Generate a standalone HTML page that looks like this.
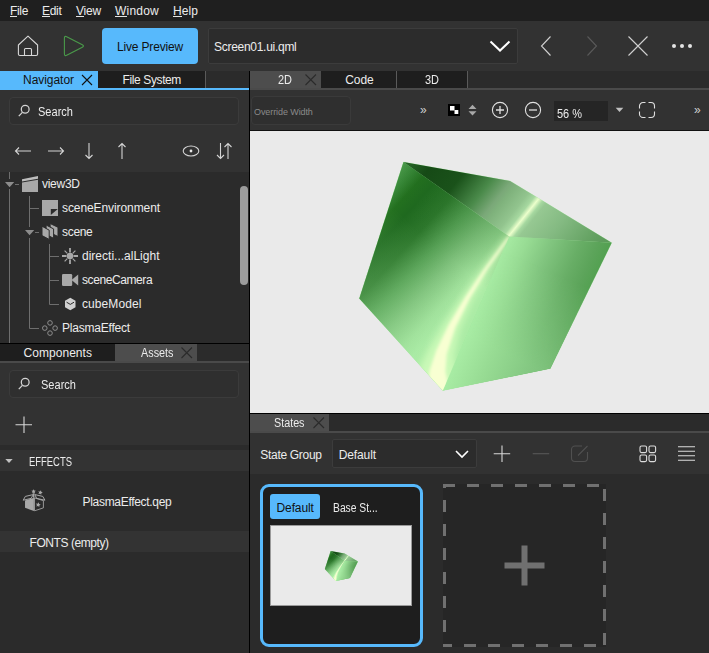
<!DOCTYPE html>
<html><head><meta charset="utf-8"><title>Qt Design Studio</title>
<style>
html,body{margin:0;padding:0;background:#2b2b2b;}
body{width:709px;height:653px;position:relative;overflow:hidden;font-family:"Liberation Sans",sans-serif;color:#ececec;}
body>div,body>svg,body>span{position:absolute;display:block;}
.t{white-space:nowrap;}
u{text-decoration:underline;text-underline-offset:1px;}
</style></head><body>
<div style="left:0px;top:0px;width:709px;height:21px;background:#1f1f1f;"></div>
<div style="left:0px;top:21px;width:709px;height:50px;background:#323232;"></div>
<div style="left:0px;top:71px;width:249px;height:19px;background:#2b2b2b;"></div>
<div style="left:0px;top:71px;width:205px;height:17px;background:#1e1e1e;"></div>
<div style="left:0px;top:71px;width:98px;height:17px;background:#57b9fc;"></div>
<div style="left:205px;top:71px;width:1px;height:17px;background:#5a5a5a;"></div>
<div style="left:0px;top:88px;width:249px;height:2px;background:#57b9fc;"></div>
<div style="left:0px;top:90px;width:249px;height:82px;background:#323232;"></div>
<div style="left:0px;top:172px;width:249px;height:171px;background:#2b2b2b;"></div>
<div style="left:0px;top:343px;width:249px;height:1px;background:#000;"></div>
<div style="left:0px;top:344px;width:249px;height:17px;background:#2b2b2b;"></div>
<div style="left:0px;top:344px;width:115px;height:17px;background:#1e1e1e;"></div>
<div style="left:115px;top:344px;width:82px;height:17px;background:#4d4d4d;"></div>
<div style="left:0px;top:361px;width:249px;height:2px;background:#4a4a4a;"></div>
<div style="left:0px;top:363px;width:249px;height:82px;background:#323232;"></div>
<div style="left:0px;top:445px;width:249px;height:208px;background:#2b2b2b;"></div>
<div style="left:0px;top:450px;width:249px;height:21px;background:#333333;"></div>
<div style="left:0px;top:531px;width:249px;height:21px;background:#333333;"></div>
<div style="left:249px;top:71px;width:1px;height:582px;background:#000;"></div>
<div style="left:250px;top:71px;width:459px;height:19px;background:#2b2b2b;"></div>
<div style="left:250px;top:71px;width:71px;height:17px;background:#4d4d4d;"></div>
<div style="left:321px;top:71px;width:146px;height:17px;background:#1e1e1e;"></div>
<div style="left:396px;top:71px;width:1px;height:17px;background:#5a5a5a;"></div>
<div style="left:467px;top:71px;width:1px;height:17px;background:#5a5a5a;"></div>
<div style="left:250px;top:88px;width:459px;height:2px;background:#4a4a4a;"></div>
<div style="left:250px;top:90px;width:459px;height:41px;background:#323232;"></div>
<div style="left:250px;top:130px;width:459px;height:1px;background:#111;"></div>
<div style="left:250px;top:131px;width:459px;height:282px;background:#eaeaea;"></div>
<div style="left:250px;top:413px;width:459px;height:1px;background:#000;"></div>
<div style="left:250px;top:414px;width:459px;height:17px;background:#2b2b2b;"></div>
<div style="left:250px;top:414px;width:79px;height:17px;background:#4d4d4d;"></div>
<div style="left:250px;top:431px;width:459px;height:2px;background:#4a4a4a;"></div>
<div style="left:250px;top:433px;width:459px;height:41px;background:#323232;"></div>
<div style="left:250px;top:474px;width:459px;height:179px;background:#2b2b2b;"></div>
<span class="t" style="left:10px;top:3px;font-size:12px;line-height:16px;height:16px;letter-spacing:-0.336px;">File</span>
<div style="left:10px;top:16px;width:7px;height:1px;background:#e4e4e4;"></div>
<span class="t" style="left:42px;top:3px;font-size:12px;line-height:16px;height:16px;letter-spacing:-0.297px;">Edit</span>
<div style="left:42px;top:16px;width:8px;height:1px;background:#e4e4e4;"></div>
<span class="t" style="left:76px;top:3px;font-size:12px;line-height:16px;height:16px;letter-spacing:-0.199px;">View</span>
<div style="left:76px;top:16px;width:8px;height:1px;background:#e4e4e4;"></div>
<span class="t" style="left:115px;top:3px;font-size:12px;line-height:16px;height:16px;letter-spacing:0.219px;">Window</span>
<div style="left:115px;top:16px;width:12px;height:1px;background:#e4e4e4;"></div>
<span class="t" style="left:173px;top:3px;font-size:12px;line-height:16px;height:16px;letter-spacing:0.078px;">Help</span>
<div style="left:173px;top:16px;width:9px;height:1px;background:#e4e4e4;"></div>
<svg style="left:14px;top:32px;" width="28" height="28" viewBox="0 0 28 28"><path d="M4.4 22 V13 L14 4.200 L23.600 13 V22 A1.500 1.500 0 0 1 22.100 23.500 H5.900 A1.500 1.500 0 0 1 4.400 22 Z M10.500 23.500 V17.500 A1 1 0 0 1 11.500 16.500 H16.500 A1 1 0 0 1 17.500 17.500 V23.500" fill="none" stroke="#d8d8d8" stroke-width="1.1" stroke-linejoin="round"/></svg>
<svg style="left:60px;top:32px;" width="28" height="28" viewBox="0 0 28 28"><path d="M4.40 6.20 Q4.40 3.60 6.71 4.79 L22.29 12.81 Q24.60 14.00 22.29 15.19 L6.71 23.21 Q4.40 24.40 4.40 21.80 Z" fill="none" stroke="#4a9a4a" stroke-width="1.1" stroke-linejoin="round"/></svg>
<div style="left:102px;top:28px;width:96px;height:36px;background:#57b9fc;border-radius:4px;"></div>
<span class="t" style="left:117px;top:39px;font-size:12px;line-height:16px;height:16px;color:#111;letter-spacing:-0.169px;">Live Preview</span>
<div style="left:208px;top:28px;width:310px;height:36px;background:#2c2c2c;border:1px solid #3c3c3c;box-sizing:border-box;border-radius:2px;"></div>
<span class="t" style="left:214px;top:39px;font-size:12px;line-height:16px;height:16px;letter-spacing:-0.281px;">Screen01.ui.qml</span>
<svg style="left:486px;top:36px;" width="28" height="20" viewBox="0 0 28 20"><path d="M4.5 5.5 L14 14.5 L23.5 5.5" fill="none" stroke="#fff" stroke-width="2" /></svg>
<svg style="left:536px;top:32px;" width="20" height="28" viewBox="0 0 20 28"><path d="M14.5 4.5 L5.5 14 L14.5 23.5" fill="none" stroke="#d0d0d0" stroke-width="1.1"/></svg>
<svg style="left:582px;top:32px;" width="20" height="28" viewBox="0 0 20 28"><path d="M5.5 4.5 L14.5 14 L5.5 23.5" fill="none" stroke="#5a5a5a" stroke-width="1.1"/></svg>
<svg style="left:624px;top:32px;" width="28" height="28" viewBox="0 0 28 28"><path d="M4.5 4.5 L23.5 23.5 M23.5 4.5 L4.5 23.5" fill="none" stroke="#d0d0d0" stroke-width="1.1"/></svg>
<svg style="left:668px;top:40px;" width="28" height="12" viewBox="0 0 28 12"><circle cx="6" cy="6" r="2" fill="#e4e4e4"/><circle cx="14" cy="6" r="2" fill="#e4e4e4"/><circle cx="22" cy="6" r="2" fill="#e4e4e4"/></svg>
<span class="t" style="left:23px;top:72px;font-size:12px;line-height:16px;height:16px;color:#111;letter-spacing:-0.040px;">Navigator</span>
<svg style="left:80px;top:73px;" width="14" height="14" viewBox="0 0 14 14"><path d="M2 2 L12 12 M12 2 L2 12" stroke="#111" stroke-width="1.1"/></svg>
<span class="t" style="left:122.5px;top:72px;font-size:12px;line-height:16px;height:16px;letter-spacing:-0.381px;">File System</span>
<div style="left:9px;top:97px;width:230px;height:28px;background:#2f2f2f;border:1px solid #3b3b3b;box-sizing:border-box;border-radius:4px;"></div>
<svg style="left:17px;top:104px;" width="14" height="14" viewBox="0 0 14 14"><circle cx="8.200" cy="5.300" r="3.900" fill="none" stroke="#d4d4d4" stroke-width="1.25"/><path d="M5.400 8.300 L1.800 12.200" stroke="#d4d4d4" stroke-width="1.25"/></svg>
<span class="t" style="left:38px;top:104px;font-size:12px;line-height:16px;height:16px;transform:scaleX(0.9203);transform-origin:0 0;">Search</span>
<svg style="left:13px;top:141px;" width="20" height="20" viewBox="0 0 20 20"><path d="M18 10 H2.5 M6 6.5 L2.5 10 L6 13.5" stroke="#d4d4d4" stroke-width="1.1" fill="none"/></svg>
<svg style="left:46px;top:141px;" width="20" height="20" viewBox="0 0 20 20"><path d="M2 10 H17.5 M14 6.5 L17.5 10 L14 13.5" stroke="#d4d4d4" stroke-width="1.1" fill="none"/></svg>
<svg style="left:79px;top:141px;" width="20" height="20" viewBox="0 0 20 20"><path d="M10 2 V17.5 M6.5 14 L10 17.5 L13.5 14" stroke="#d4d4d4" stroke-width="1.1" fill="none"/></svg>
<svg style="left:112px;top:141px;" width="20" height="20" viewBox="0 0 20 20"><path d="M10 18 V2.5 M6.5 6 L10 2.5 L13.5 6" stroke="#d4d4d4" stroke-width="1.1" fill="none"/></svg>
<svg style="left:181px;top:141px;" width="20" height="20" viewBox="0 0 20 20"><ellipse cx="10" cy="10" rx="7.8" ry="5" stroke="#d4d4d4" stroke-width="1.1" fill="none"/><circle cx="10" cy="10" r="1.4" fill="#e8e8e8"/></svg>
<svg style="left:214px;top:141px;" width="20" height="20" viewBox="0 0 20 20"><path d="M6.5 2 V17.5 M3 14 L6.5 17.5 L10 14 M14 18 V2.5 M10.5 6 L14 2.5 L17.5 6" stroke="#d4d4d4" stroke-width="1.1" fill="none"/></svg>
<svg style="left:0px;top:172px;" width="249" height="171" viewBox="0 0 249 171">
<path d="M9.5 0 V7 M9.500 17 V171 M29.5 24 V55 M29.500 66 V156.5 H39 M29.5 36.5 H39 M49.5 72 V132.5 H59 M49.5 84.5 H59 M49.5 108.5 H59 M15 12.5 H19 M35 60.5 H39" stroke="#6e6e6e" stroke-width="1" fill="none"/>
<path d="M5 10 H14.2 L9.6 15.3 Z M25 58 H34.2 L29.6 63.300 Z" fill="#8c8c8c"/>
</svg>
<svg style="left:22px;top:175px;" width="17" height="18" viewBox="0 0 17 18"><path d="M0 4.300 L16 1 V3.800 L0 6.400 Z" fill="#bcbcbc"/><path d="M0 7.400 L16 4.800 V17 H0 Z" fill="#a8a8a8"/></svg>
<svg style="left:42px;top:200px;" width="16" height="16" viewBox="0 0 16 16"><path d="M0 0 H16 V16 H0 Z" fill="#a8a8a8"/><path d="M8.800 9 H15.800 L8.800 15 Z" fill="#2b2b2b"/></svg>
<svg style="left:42px;top:223px;" width="17" height="18" viewBox="0 0 17 18"><g stroke="#2b2b2b" stroke-width="1" fill="#a8a8a8"><path d="M8.100 0.500 L16 4.300 V13.500 L8.100 9.800 Z"/><path d="M4.100 2 L11.600 5.900 V15.300 L4.100 11.500 Z"/><path d="M0 3.200 L7.200 7.200 V16.400 L0 12.600 Z"/></g></svg>
<svg style="left:61px;top:247px;" width="18" height="18" viewBox="0 0 18 18"><path d="M9 1 V5.500 M9 12.500 V17 M1 9 H5.500 M12.500 9 H17" stroke="#a8a8a8" stroke-width="1.8"/><path d="M3.600 3.600 L6.300 6.300 M11.700 11.700 L14.400 14.400 M14.400 3.600 L11.700 6.300 M6.300 11.700 L3.600 14.400" stroke="#a8a8a8" stroke-width="1.2"/><circle cx="9" cy="9" r="3.300" fill="#a8a8a8"/></svg>
<svg style="left:62px;top:274px;" width="17" height="12" viewBox="0 0 17 12"><rect x="0" y="0" width="10.200" height="12" rx="1.300" fill="#a8a8a8"/><path d="M9.500 6 L16.200 0.600 V11.600 Z" fill="#a8a8a8"/></svg>
<svg style="left:64px;top:297px;" width="13" height="14" viewBox="0 0 13 14"><path d="M6.300 0.800 L11.500 3.800 V10.200 L6.300 13.200 L1 10.200 V3.800 Z" fill="#d0d0d0"/><path d="M2.600 5.200 L6.300 7.400 L10 5.200" fill="none" stroke="#2b2b2b" stroke-width="1"/></svg>
<svg style="left:41px;top:319px;" width="18" height="18" viewBox="0 0 18 18"><g fill="none" stroke="#8e8e8e" stroke-width="1"><circle cx="9" cy="3.900" r="2.300"/><circle cx="9" cy="14.100" r="2.300"/><circle cx="3.800" cy="9.100" r="2.300"/><circle cx="14.100" cy="9.100" r="2.300"/></g></svg>
<span class="t" style="left:42px;top:176px;font-size:12px;line-height:16px;height:16px;letter-spacing:-0.277px;">view3D</span>
<span class="t" style="left:62px;top:200px;font-size:12px;line-height:16px;height:16px;letter-spacing:-0.087px;">sceneEnvironment</span>
<span class="t" style="left:62px;top:224px;font-size:12px;line-height:16px;height:16px;letter-spacing:-0.306px;">scene</span>
<span class="t" style="left:82px;top:248px;font-size:12px;line-height:16px;height:16px;letter-spacing:0.007px;">directi...alLight</span>
<span class="t" style="left:82px;top:272px;font-size:12px;line-height:16px;height:16px;letter-spacing:-0.409px;">sceneCamera</span>
<span class="t" style="left:82px;top:296px;font-size:12px;line-height:16px;height:16px;letter-spacing:0.087px;">cubeModel</span>
<span class="t" style="left:62px;top:320px;font-size:12px;line-height:16px;height:16px;letter-spacing:-0.207px;">PlasmaEffect</span>
<div style="left:240px;top:186px;width:8px;height:99px;background:#9c9c9c;border-radius:4px;"></div>
<span class="t" style="left:23.5px;top:345px;font-size:12px;line-height:16px;height:16px;letter-spacing:0.045px;">Components</span>
<span class="t" style="left:140.5px;top:345px;font-size:12px;line-height:16px;height:16px;transform:scaleX(0.9024);transform-origin:0 0;">Assets</span>
<svg style="left:180px;top:346px;" width="14" height="14" viewBox="0 0 14 14"><path d="M1.5 1.5 L12 12 M12 1.5 L1.5 12" stroke="#2b2b2b" stroke-width="1.1"/></svg>
<div style="left:9px;top:370px;width:230px;height:28px;background:#2f2f2f;border:1px solid #3b3b3b;box-sizing:border-box;border-radius:4px;"></div>
<svg style="left:17px;top:377px;" width="14" height="14" viewBox="0 0 14 14"><circle cx="8.200" cy="5.300" r="3.900" fill="none" stroke="#d4d4d4" stroke-width="1.25"/><path d="M5.400 8.300 L1.800 12.200" stroke="#d4d4d4" stroke-width="1.25"/></svg>
<span class="t" style="left:41px;top:377px;font-size:12px;line-height:16px;height:16px;transform:scaleX(0.9203);transform-origin:0 0;">Search</span>
<svg style="left:14px;top:415px;" width="20" height="20" viewBox="0 0 20 20"><path d="M10 1.5 V18 M1.5 9.7 H18" stroke="#d8d8d8" stroke-width="1.1"/></svg>
<svg style="left:4px;top:456px;" width="10" height="10" viewBox="0 0 10 10"><path d="M1.3 3 H8.7 L5 7 Z" fill="#c0c0c0"/></svg>
<span class="t" style="left:29px;top:454px;font-size:12px;line-height:16px;height:16px;transform:scaleX(0.7865);transform-origin:0 0;">EFFECTS</span>
<svg style="left:14px;top:480px;" width="40" height="40" viewBox="0 0 40 40"><g transform="scale(0.06125)">
<path d="M180 335 L325 290 V505 L180 455 Z" fill="#a8a8a8"/>
<path d="M335 292 L480 337 V455 L335 503 Z" fill="none" stroke="#a8a8a8" stroke-width="14"/>
<path d="M150 330 L185 268 L315 238 L280 300 Z" fill="none" stroke="#a8a8a8" stroke-width="16" stroke-linejoin="round"/>
<path d="M505 330 L470 268 L340 238 L370 300 Z" fill="none" stroke="#a8a8a8" stroke-width="16" stroke-linejoin="round"/>
<path d="M322 215 V290" stroke="#a8a8a8" stroke-width="22"/>
<g transform="translate(320,188) scale(38)"><path d="M0 -1 L0.290 -0.400 L0.950 -0.310 L0.470 0.150 L0.590 0.810 L0 0.500 L-0.590 0.810 L-0.470 0.150 L-0.950 -0.310 L-0.290 -0.400 Z" fill="#a8a8a8"/></g>
<g transform="translate(430,205) rotate(15) scale(40)"><path d="M0 -1 L0.290 -0.400 L0.950 -0.310 L0.470 0.150 L0.590 0.810 L0 0.500 L-0.590 0.810 L-0.470 0.150 L-0.950 -0.310 L-0.290 -0.400 Z" fill="#a8a8a8"/></g>
<g transform="translate(395,405) rotate(10) scale(42)"><path d="M0 -1 L0.290 -0.400 L0.950 -0.310 L0.470 0.150 L0.590 0.810 L0 0.500 L-0.590 0.810 L-0.470 0.150 L-0.950 -0.310 L-0.290 -0.400 Z" fill="#a8a8a8"/></g>
</g></svg>
<span class="t" style="left:82.5px;top:494px;font-size:12px;line-height:16px;height:16px;letter-spacing:-0.303px;">PlasmaEffect.qep</span>
<span class="t" style="left:29.5px;top:535px;font-size:12px;line-height:16px;height:16px;letter-spacing:-0.436px;">FONTS (empty)</span>
<span class="t" style="left:278px;top:72px;font-size:12px;line-height:16px;height:16px;transform:scaleX(0.9124);transform-origin:0 0;">2D</span>
<svg style="left:304px;top:73px;" width="14" height="14" viewBox="0 0 14 14"><path d="M1.5 1.5 L12 12 M12 1.5 L1.5 12" stroke="#2b2b2b" stroke-width="1.1"/></svg>
<span class="t" style="left:345.3px;top:72px;font-size:12px;line-height:16px;height:16px;letter-spacing:-0.122px;">Code</span>
<span class="t" style="left:425px;top:72px;font-size:12px;line-height:16px;height:16px;transform:scaleX(0.9124);transform-origin:0 0;">3D</span>
<div style="left:251px;top:96px;width:100px;height:29px;background:#2f2f2f;border:1px solid #3a3a3a;box-sizing:border-box;border-radius:4px;"></div>
<span class="t" style="left:254px;top:104px;font-size:9px;line-height:16px;height:16px;color:#8a8a8a;letter-spacing:-0.088px;">Override Width</span>
<span class="t" style="left:420px;top:102px;font-size:12px;line-height:16px;height:16px;color:#d0d0d0;">»</span>
<span class="t" style="left:694px;top:102px;font-size:12px;line-height:16px;height:16px;color:#d0d0d0;">»</span>
<svg style="left:448px;top:104px;" width="12" height="12" viewBox="0 0 12 12"><rect width="12" height="12" fill="#000"/><rect x="2" y="2" width="4.5" height="4.5" fill="#fff"/><rect x="6.5" y="6" width="3.8" height="4" fill="#fff"/></svg>
<svg style="left:468px;top:104px;" width="9" height="12" viewBox="0 0 9 12"><path d="M0.5 5 L4.5 0.7 L8.5 5 Z M0.5 7.2 L4.5 11.5 L8.5 7.2 Z" fill="#a8a8a8"/></svg>
<svg style="left:490px;top:100px;" width="20" height="20" viewBox="0 0 20 20"><circle cx="10" cy="10" r="7.6" fill="none" stroke="#e0e0e0" stroke-width="1.1"/><path d="M6 10 H14 M10 6 V14" stroke="#e0e0e0" stroke-width="1.3"/></svg>
<svg style="left:523px;top:100px;" width="20" height="20" viewBox="0 0 20 20"><circle cx="10" cy="10" r="7.6" fill="none" stroke="#e0e0e0" stroke-width="1.1"/><path d="M6 10 H14" stroke="#e0e0e0" stroke-width="1.3"/></svg>
<div style="left:554px;top:101px;width:54px;height:20px;background:#252525;"></div>
<span class="t" style="left:556.5px;top:106px;font-size:13px;line-height:16px;height:16px;transform:scaleX(0.8434);transform-origin:0 0;">56 %</span>
<svg style="left:615px;top:107px;" width="9" height="6" viewBox="0 0 9 6"><path d="M0.7 0.8 H8.3 L4.5 5 Z" fill="#c0c0c0"/></svg>
<svg style="left:638px;top:101px;" width="18" height="18" viewBox="0 0 18 18"><path d="M7.500 1.500 H5 A3.500 3.500 0 0 0 1.500 5 V7.500 M10.500 1.500 H13 A3.500 3.500 0 0 1 16.500 5 V7.500 M16.500 10.500 V13 A3.500 3.500 0 0 1 13 16.500 H10.500 M7.500 16.500 H5 A3.500 3.500 0 0 1 1.500 13 V10.500" fill="none" stroke="#e0e0e0" stroke-width="1.1"/></svg>
<svg style="left:250px;top:131px;" width="459" height="282" viewBox="0 0 459 282">
<defs>
<linearGradient id="gl" gradientUnits="userSpaceOnUse" x1="403.5" y1="162" x2="511.4" y2="259.4"><stop offset="0.0000" stop-color="#52a252"/><stop offset="0.0832" stop-color="#3a8a3a"/><stop offset="0.1657" stop-color="#23701f"/><stop offset="0.2552" stop-color="#1f691f"/><stop offset="0.4065" stop-color="#2d772c"/><stop offset="0.5509" stop-color="#559f54"/><stop offset="0.7022" stop-color="#7ec07b"/><stop offset="0.8535" stop-color="#9fdf9a"/><stop offset="0.9429" stop-color="#aaeaa5"/><stop offset="1.0000" stop-color="#aceca6"/></linearGradient>
<linearGradient id="gt" gradientUnits="userSpaceOnUse" x1="403.5" y1="162" x2="570.4" y2="295.75"><stop offset="0.0000" stop-color="#2a6a2a"/><stop offset="0.1121" stop-color="#164a16"/><stop offset="0.2523" stop-color="#1a521a"/><stop offset="0.3738" stop-color="#4a8a4a"/><stop offset="0.4486" stop-color="#7aa878"/><stop offset="0.4766" stop-color="#7fb27c"/><stop offset="0.5467" stop-color="#92c48e"/><stop offset="0.5794" stop-color="#a6d8a0"/><stop offset="0.6005" stop-color="#ecffcc"/><stop offset="0.6215" stop-color="#a6d8a0"/><stop offset="0.6402" stop-color="#96c892"/><stop offset="0.7523" stop-color="#84ba82"/><stop offset="0.9187" stop-color="#62a060"/><stop offset="1.0000" stop-color="#5a9858"/></linearGradient>
<linearGradient id="gr" gradientUnits="userSpaceOnUse" x1="476" y1="313.5" x2="567.8" y2="353.1"><stop offset="0.0000" stop-color="#a6eaa2"/><stop offset="0.1800" stop-color="#98dc94"/><stop offset="0.4200" stop-color="#80c47e"/><stop offset="0.6800" stop-color="#68ae66"/><stop offset="0.8400" stop-color="#5ca45a"/><stop offset="0.9700" stop-color="#52a050"/></linearGradient>
<linearGradient id="gr2" gradientUnits="userSpaceOnUse" x1="476" y1="313.5" x2="567.8" y2="353.1"><stop offset="0.0000" stop-color="#a8eca4"/><stop offset="0.3000" stop-color="#98dc94"/><stop offset="0.7000" stop-color="#84c882"/><stop offset="0.9000" stop-color="#7cc07a"/><stop offset="0.9700" stop-color="#7abe78"/></linearGradient>
<linearGradient id="gm" gradientUnits="userSpaceOnUse" x1="503.4" y1="250.1" x2="465.8" y2="337.3"><stop offset="0" stop-color="#000"/><stop offset="1" stop-color="#fff"/></linearGradient>
<mask id="mk" maskUnits="userSpaceOnUse" x="350" y="150" width="280" height="260"><rect x="350" y="150" width="280" height="260" fill="url(#gm)"/></mask>
<linearGradient id="go" gradientUnits="userSpaceOnUse" x1="512.2" y1="233.3" x2="405" y2="352"><stop offset="0" stop-color="#1f691f" stop-opacity="0.22"/><stop offset="0.375" stop-color="#1f691f" stop-opacity="0"/><stop offset="0.375" stop-color="#a8eca4" stop-opacity="0"/><stop offset="1" stop-color="#a8eca4" stop-opacity="0.28"/></linearGradient>
<filter id="b1" x="-30%" y="-30%" width="160%" height="160%"><feGaussianBlur stdDeviation="1.5"/></filter>
<filter id="b2" x="-30%" y="-30%" width="160%" height="160%"><feGaussianBlur stdDeviation="3.5"/></filter>
<clipPath id="cl"><path d="M403.5 162 L509.3 236.5 L442.8 390.5 L359.3 298.4 Z"/></clipPath>
</defs><g transform="translate(-250,-131)">
<path d="M403.5 162 L510 181 L611.7 242.8 L550.3 368.5 L442.8 390.5 L359.3 298.4 Z" fill="#a2e69e" stroke="#a2e69e" stroke-width="0.3"/>
<path d="M403.5 162 L509.3 236.5 L442.8 390.5 L359.3 298.4 Z" fill="url(#gl)"/>
<path d="M403.5 162 L509.3 236.5 L442.8 390.5 L359.3 298.4 Z" fill="url(#go)"/>
<path d="M509.3 236.5 L611.7 242.8 L550.3 368.5 L442.8 390.5 Z" fill="url(#gr)"/>
<path d="M509.3 236.5 L611.7 242.8 L550.3 368.5 L442.8 390.5 Z" fill="url(#gr2)" mask="url(#mk)"/>
<path d="M403.5 162 L510 181 L611.7 242.8 L509.3 236.5 Z" fill="url(#gt)"/>
<g clip-path="url(#cl)">
<path d="M507.2 235.0 L482.8 267.0 L462.9 294.9 L444.4 322.7 L428.9 348.2 L418.4 369.6 L412.1 393.3 L464.9 390.7 L456.6 372.4 L454.1 356.4 L459.6 329.9 L472.3 300.3 L488.8 271.0 L511.4 238.0Z" fill="#d8ffc0" opacity="0.7" filter="url(#b2)"/>
<path d="M508.4 235.9 L484.6 268.2 L465.7 296.5 L448.8 324.8 L436.3 350.6 L429.5 370.4 L427.5 392.5 L449.5 391.5 L445.5 371.6 L446.7 354.0 L455.2 327.8 L469.5 298.7 L487.0 269.8 L510.2 237.1Z" fill="#f8ffd2" filter="url(#b1)"/>
</g>
</g></svg>
<span class="t" style="left:274.3px;top:415px;font-size:12px;line-height:16px;height:16px;transform:scaleX(0.8962);transform-origin:0 0;">States</span>
<svg style="left:312px;top:416px;" width="14" height="14" viewBox="0 0 14 14"><path d="M1.5 1.5 L12 12 M12 1.5 L1.5 12" stroke="#2b2b2b" stroke-width="1.1"/></svg>
<span class="t" style="left:260.3px;top:447px;font-size:12px;line-height:16px;height:16px;letter-spacing:-0.302px;">State Group</span>
<div style="left:332px;top:439px;width:145px;height:29px;background:#2c2c2c;border:1px solid #3c3c3c;box-sizing:border-box;border-radius:2px;"></div>
<span class="t" style="left:338.7px;top:447px;font-size:12px;line-height:16px;height:16px;letter-spacing:-0.104px;">Default</span>
<svg style="left:454px;top:448px;" width="16" height="12" viewBox="0 0 16 12"><path d="M2 3 L8 9 L14 3" fill="none" stroke="#fff" stroke-width="1.6"/></svg>
<svg style="left:492px;top:444px;" width="20" height="20" viewBox="0 0 20 20"><path d="M10 1.5 V18 M1.7 9.7 H18.2" stroke="#d8d8d8" stroke-width="1.1"/></svg>
<svg style="left:531px;top:444px;" width="20" height="20" viewBox="0 0 20 20"><path d="M1.7 9.7 H18.2" stroke="#585858" stroke-width="1.1"/></svg>
<svg style="left:570px;top:444px;" width="20" height="20" viewBox="0 0 20 20"><path d="M12 2 H5 A3.5 3.5 0 0 0 1.5 5.500 V14 A3.5 3.5 0 0 0 5 17.5 H14 A3.5 3.5 0 0 0 17.5 14 V8 M8 11.500 L17.500 2" fill="none" stroke="#505050" stroke-width="1.1"/></svg>
<svg style="left:638.5px;top:445px;" width="18" height="18" viewBox="0 0 18 18"><g fill="none" stroke="#dcdcdc" stroke-width="1.1"><rect x="1" y="1" width="6.6" height="6.600" rx="1.5"/><rect x="10" y="1" width="6.6" height="6.6" rx="1.5"/><rect x="1" y="10" width="6.6" height="6.6" rx="1.5"/><rect x="10" y="10" width="6.6" height="6.6" rx="1.5"/></g></svg>
<svg style="left:678px;top:445px;" width="18" height="18" viewBox="0 0 18 18"><path d="M0 1.8 H17 M0 6.300 H17 M0 10.8 H17 M0 15.3 H17" stroke="#dcdcdc" stroke-width="1.1"/></svg>
<div style="left:260px;top:484px;width:163px;height:163px;background:#1e1e1e;border:3px solid #57b9fc;box-sizing:border-box;border-radius:9px;"></div>
<div style="left:270px;top:494px;width:50px;height:25px;background:#57b9fc;border-radius:3px;"></div>
<span class="t" style="left:276.5px;top:500px;font-size:12px;line-height:16px;height:16px;color:#111;letter-spacing:-0.104px;">Default</span>
<span class="t" style="left:332.6px;top:500px;font-size:12px;line-height:16px;height:16px;transform:scaleX(0.8591);transform-origin:0 0;">Base St...</span>
<div style="left:270px;top:525px;width:142px;height:81px;background:#eaeaea;border:1px solid #9a9a9a;box-sizing:border-box;"></div>
<svg style="left:0px;top:0px;pointer-events:none;" width="709" height="653" viewBox="0 0 709 653"><g transform="translate(277.8,529.8) scale(0.131)">
<path d="M403.5 162 L510 181 L611.7 242.8 L550.3 368.5 L442.8 390.5 L359.3 298.4 Z" fill="#a2e69e" stroke="#a2e69e" stroke-width="0.3"/>
<path d="M403.5 162 L509.3 236.5 L442.8 390.5 L359.3 298.4 Z" fill="url(#gl)"/>
<path d="M403.5 162 L509.3 236.5 L442.8 390.5 L359.3 298.4 Z" fill="url(#go)"/>
<path d="M509.3 236.5 L611.7 242.8 L550.3 368.5 L442.8 390.5 Z" fill="url(#gr)"/>
<path d="M509.3 236.5 L611.7 242.8 L550.3 368.5 L442.8 390.5 Z" fill="url(#gr2)" mask="url(#mk)"/>
<path d="M403.5 162 L510 181 L611.7 242.8 L509.3 236.5 Z" fill="url(#gt)"/>
<g clip-path="url(#cl)">
<path d="M507.2 235.0 L482.8 267.0 L462.9 294.9 L444.4 322.7 L428.9 348.2 L418.4 369.6 L412.1 393.3 L464.9 390.7 L456.6 372.4 L454.1 356.4 L459.6 329.9 L472.3 300.3 L488.8 271.0 L511.4 238.0Z" fill="#d8ffc0" opacity="0.7" filter="url(#b2)"/>
<path d="M508.4 235.9 L484.6 268.2 L465.7 296.5 L448.8 324.8 L436.3 350.6 L429.5 370.4 L427.5 392.5 L449.5 391.5 L445.5 371.6 L446.7 354.0 L455.2 327.8 L469.5 298.7 L487.0 269.8 L510.2 237.1Z" fill="#f8ffd2" filter="url(#b1)"/>
</g>
</g></svg>
<svg style="left:443px;top:484px;" width="163" height="163" viewBox="0 0 163 163"><rect x="0" y="0" width="163" height="163" fill="#262626"/>
<path d="M0 1.5 H163" stroke="#707070" stroke-width="3" stroke-dasharray="12 12" fill="none" stroke-dashoffset="0"/>
<path d="M161.5 0 V163" stroke="#707070" stroke-width="3" stroke-dasharray="12 12" fill="none" stroke-dashoffset="19"/>
<path d="M163 161.5 H0" stroke="#707070" stroke-width="3" stroke-dasharray="12 12" fill="none" stroke-dashoffset="14"/>
<path d="M1.5 163 V0" stroke="#707070" stroke-width="3" stroke-dasharray="12 12" fill="none" stroke-dashoffset="9"/>
<path d="M61.500 81.500 H101.500 M81.500 61.500 V101.500" stroke="#707070" stroke-width="6"/></svg>
</body></html>
